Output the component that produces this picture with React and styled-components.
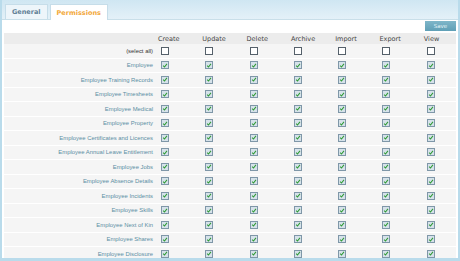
import React from 'react'
import styled, { createGlobalStyle } from 'styled-components'

const GlobalStyle = createGlobalStyle`
  html, body {
    margin: 0;
    padding: 0;
    background: #b9dbeb;
  }
  body {
    font-family: 'DejaVu Sans', Verdana, sans-serif;
  }
`

const columns = ['Create', 'Update', 'Delete', 'Archive', 'Import', 'Export', 'View']

const sections = [
  'Employee',
  'Employee Training Records',
  'Employee Timesheets',
  'Employee Medical',
  'Employee Property',
  'Employee Certificates and Licences',
  'Employee Annual Leave Entitlement',
  'Employee Jobs',
  'Employee Absence Details',
  'Employee Incidents',
  'Employee Skills',
  'Employee Next of Kin',
  'Employee Shares',
  'Employee Disclosure',
]

function Check({ checked }) {
  return (
    <Box checked={checked}>
      {checked && (
        <svg width='8' height='8' viewBox='0 0 8 8'>
          <path d='M1.5 4.2 L3.3 6 L6.6 1.8' fill='none' stroke='#2f9a35' strokeWidth='1.4' />
        </svg>
      )}
    </Box>
  )
}

function App() {
  return (
    <>
      <GlobalStyle />
      <Frame>
        <TabBar>
          <Tab>General</Tab>
          <Tab active>Permissions</Tab>
        </TabBar>
        <Panel>
          <Actions>
            <SaveButton>Save</SaveButton>
          </Actions>
          <Table>
            <HeaderRow>
              <Label />
              {columns.map((c) => (
                <HeadCell key={c}>{c}</HeadCell>
              ))}
            </HeaderRow>
            <Row>
              <Label dark>(select all)</Label>
              {columns.map((c) => (
                <Cell key={c}>
                  <Check />
                </Cell>
              ))}
            </Row>
            {sections.map((s) => (
              <Row key={s}>
                <Label>{s}</Label>
                {columns.map((c) => (
                  <Cell key={c}>
                    <Check checked />
                  </Cell>
                ))}
              </Row>
            ))}
          </Table>
        </Panel>
      </Frame>
    </>
  )
}

const Frame = styled.div`
  width: 460px;
  height: 261px;
  box-sizing: border-box;
  padding: 0 2px 3px 2px;
  overflow: hidden;
  display: flex;
  flex-direction: column;
`

const TabBar = styled.div`
  height: 19px;
  flex: none;
  display: flex;
  align-items: flex-end;
  gap: 2px;
  padding-left: 3px;
  background: linear-gradient(#cfe6f2, #e4f1f8);
  border-bottom: 1px solid #c9dfe9;
`

const Tab = styled.div`
  box-sizing: border-box;
  padding: 0 6px;
  display: flex;
  align-items: center;
  font-size: 6.5px;
  font-weight: bold;
  color: ${(p) => (p.active ? '#f2a83a' : '#5f7f96')};
  background: ${(p) => (p.active ? '#ffffff' : '#edf5fa')};
  border: 1px solid #c6dde9;
  border-bottom: none;
  margin-bottom: ${(p) => (p.active ? '-1px' : '0')};
  height: ${(p) => (p.active ? '16px' : '15px')};
`

const Panel = styled.div`
  flex: 1;
  min-height: 0;
  overflow: hidden;
  background: #ffffff;
  padding: 1px 2px 0 2px;
`

const Actions = styled.div`
  display: flex;
  justify-content: flex-end;
  height: 11px;
  margin-bottom: 1px;
`

const SaveButton = styled.button`
  width: 31px;
  height: 10px;
  padding: 0;
  border: none;
  background: linear-gradient(#7fb6c9, #5f9fb6);
  color: #e8f4f8;
  font-family: 'DejaVu Sans', Verdana, sans-serif;
  font-size: 5.5px;
`

const Table = styled.div`
  display: flex;
  flex-direction: column;
`

const grid = `
  display: grid;
  grid-template-columns: 153px repeat(6, 44.3px) 1fr;
`

const HeaderRow = styled.div`
  ${grid}
  height: 11px;
  background: #ececec;
  align-items: center;
`

const Row = styled.div`
  ${grid}
  height: 14.5px;
  box-sizing: border-box;
  background: #f5f5f5;
  border-bottom: 1px solid #ffffff;
  align-items: center;
`

const HeadCell = styled.div`
  font-size: 6.5px;
  color: #444;
  padding-left: 1px;
`

const Label = styled.div`
  font-family: 'Liberation Sans', Arial, sans-serif;
  font-size: 5.9px;
  color: ${(p) => (p.dark ? '#333' : '#5b8ea4')};
  text-align: right;
  padding-right: 4px;
  white-space: nowrap;
`

const Cell = styled.div`
  display: flex;
  padding-left: 4px;
`

const Box = styled.span`
  width: 8px;
  height: 8px;
  box-sizing: border-box;
  border: 1px solid ${(p) => (p.checked ? '#7f97a8' : '#55606a')};
  background: ${(p) => (p.checked ? '#d6e2ea' : '#ffffff')};
  display: flex;
  align-items: center;
  justify-content: center;
  svg {
    width: 7px;
    height: 7px;
  }
`

export default App
